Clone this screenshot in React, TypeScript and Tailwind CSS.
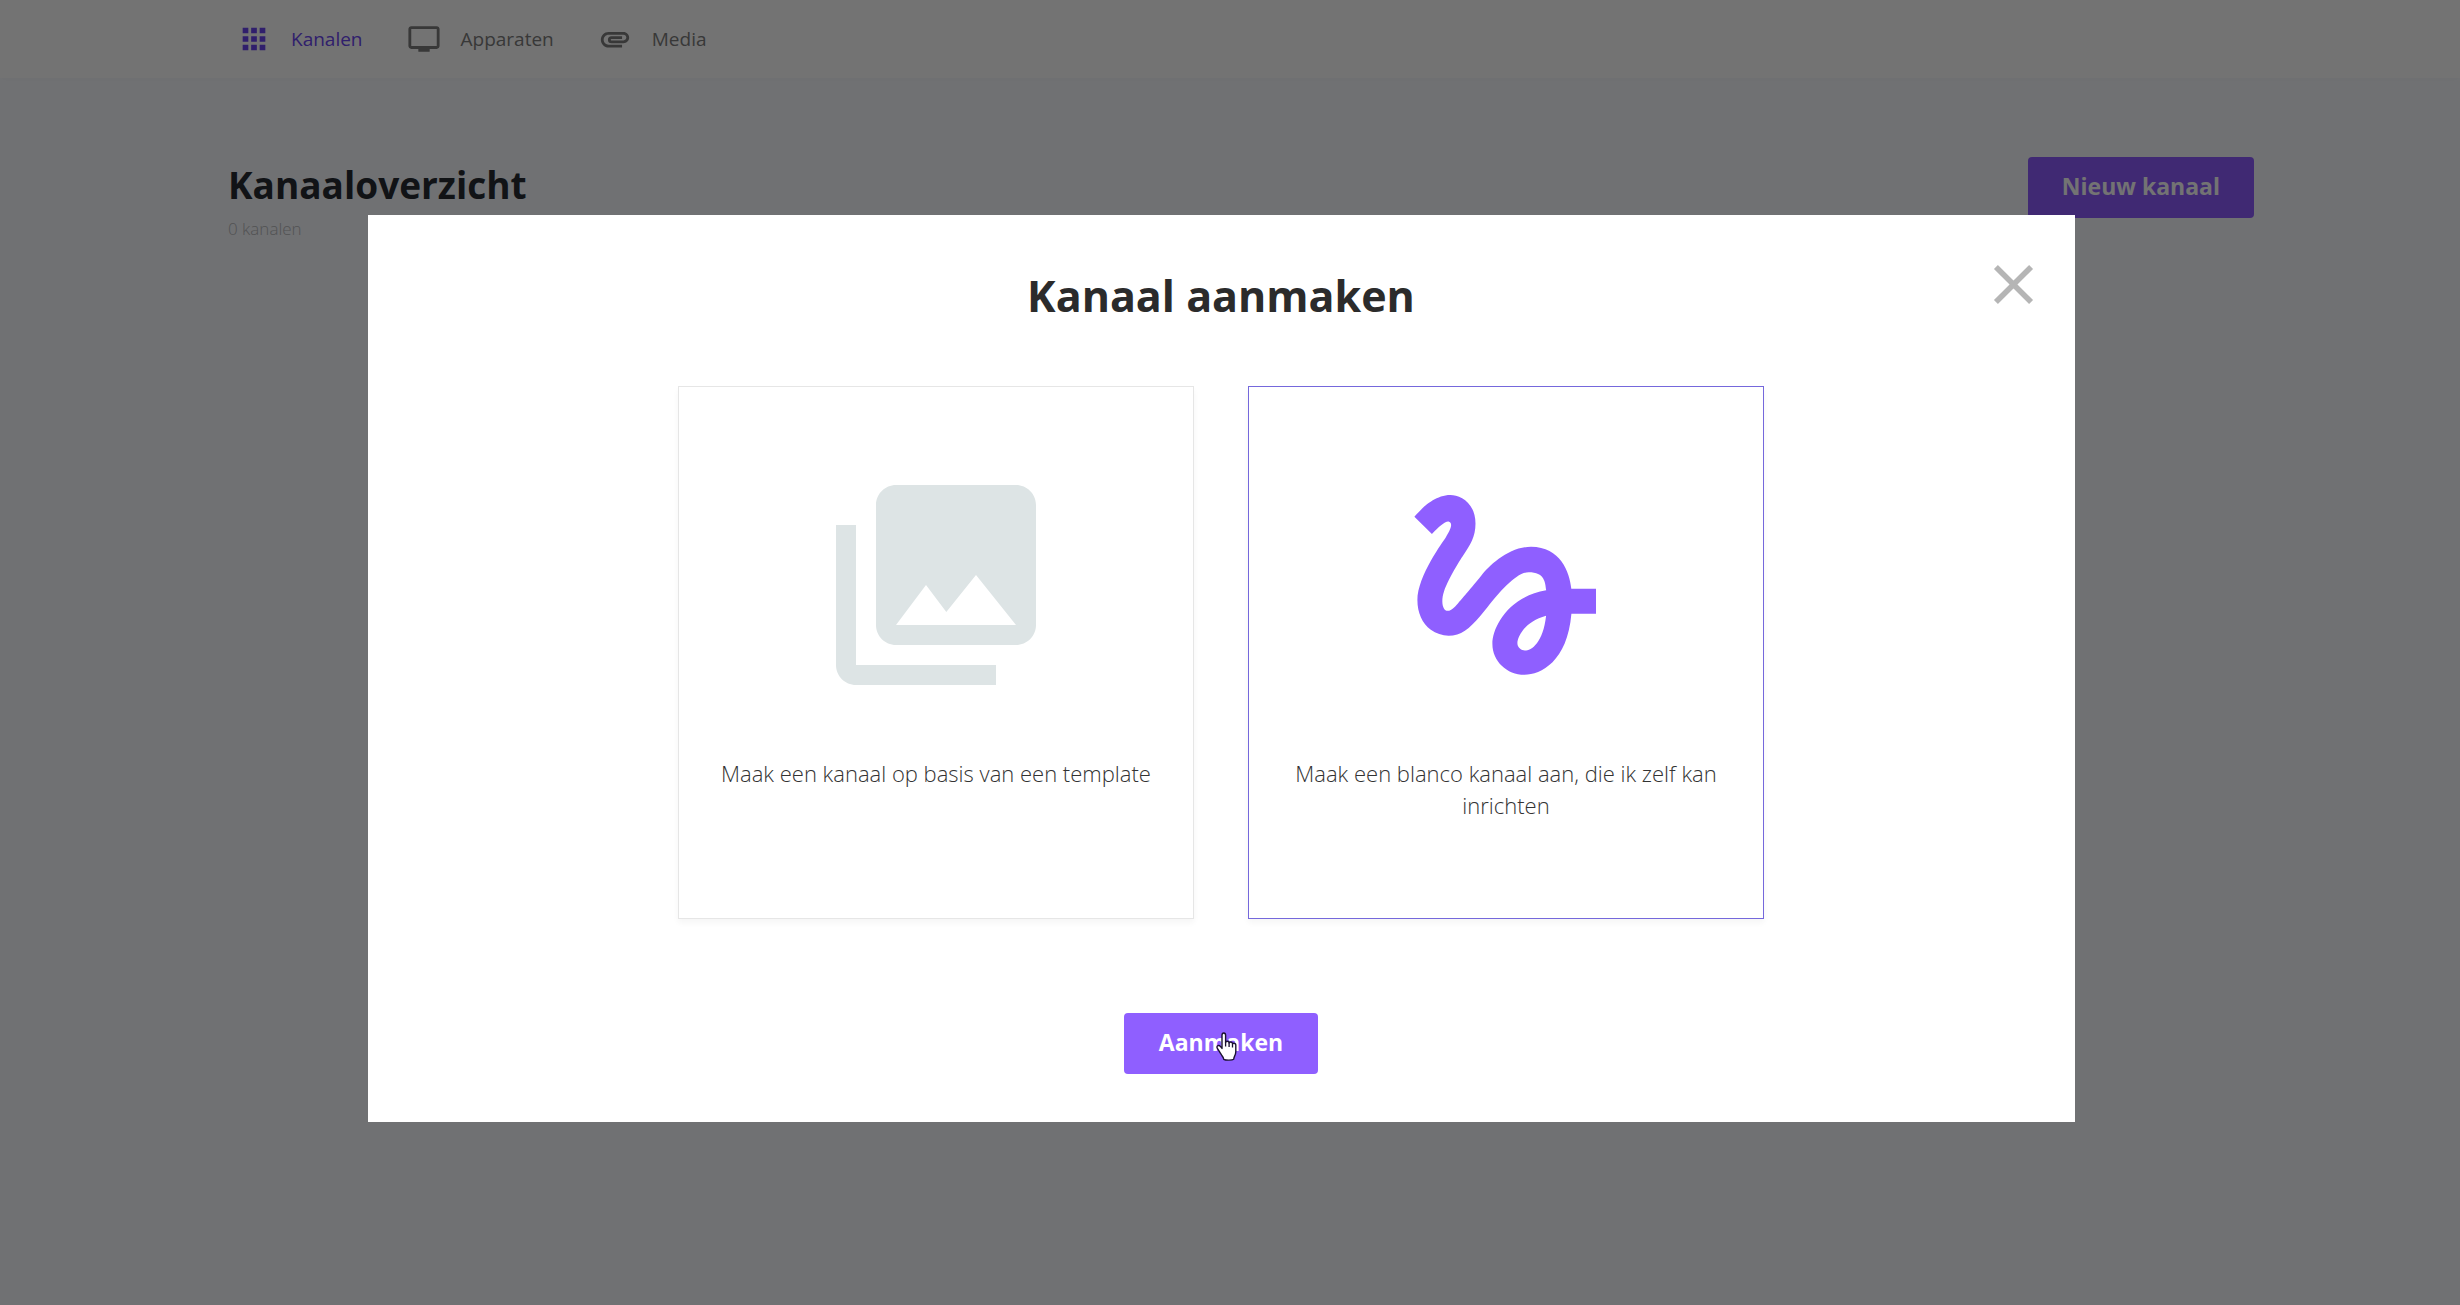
import { useState } from "react";
import type { ReactNode } from "react";
import { MdApps, MdAttachment, MdClose, MdCollections, MdGesture, MdTv } from "react-icons/md";

type NavItemProps = { icon: ReactNode; label: string; active?: boolean };

function NavItem({ icon, label, active }: NavItemProps) {
  return (
    <a
      href="#"
      aria-current={active ? "page" : undefined}
      className={
        active
          ? "flex items-center gap-5 text-[#6a45f0]"
          : "flex items-center gap-5 text-[#7c7c7c]"
      }
    >
      {icon}
      <span className="text-[19px] leading-7">{label}</span>
    </a>
  );
}

type OptionCardProps = {
  value: string;
  icon: ReactNode;
  label: string;
  selected: boolean;
  onSelect: (value: string) => void;
};

function OptionCard({ value, icon, label, selected, onSelect }: OptionCardProps) {
  return (
    <label
      className={
        selected
          ? "flex min-h-[533px] flex-1 cursor-pointer flex-col items-center gap-[52px] border border-[#7568dc] px-8 pt-[78px] text-[#8f5fff] shadow-[0_4px_6px_rgba(0,0,0,0.04)]"
          : "flex min-h-[533px] flex-1 cursor-pointer flex-col items-center gap-[52px] border border-[#e6e6e6] px-8 pt-[78px] text-[#dde4e5] shadow-[0_4px_6px_rgba(0,0,0,0.04)]"
      }
    >
      <input
        type="radio"
        name="channel-type"
        value={value}
        checked={selected}
        onChange={() => onSelect(value)}
        className="sr-only"
      />
      {icon}
      <span className="text-center text-[22px] leading-8 font-light text-[#333333]">{label}</span>
    </label>
  );
}

function HandCursor() {
  return (
    <svg
      viewBox="0 0 24 30"
      aria-hidden="true"
      className="pointer-events-none absolute top-[19px] left-[91px] h-[30px] w-6"
    >
      <path
        d="M7 3.2C7 1.9 7.8 1 8.8 1s1.8.9 1.8 2.2v7.2c.3-.9 1-1.2 1.7-1.2 1 0 1.7.7 1.8 1.7.3-.6.9-.9 1.6-.9 1 0 1.7.8 1.8 1.8.3-.4.8-.6 1.4-.6 1.1 0 1.9.9 1.9 2.1v6.2c0 2-.5 3.400-1.300 4.900-.5.900-.700 1.900-.8 2.900-1.500 1.100-8.300 1.100-9.900 0-.2-1.600-1-2.700-2.100-4.100-1.500-2-2.700-4.300-4.200-6.600-.9-1.400-.6-2.500.3-2.900 1-.5 2 0 2.800.9L7 16.400z"
        fill="#ffffff"
        stroke="#1b1230"
        strokeWidth="1.4"
        strokeLinejoin="round"
      />
      <path d="M10.600 10v4.500M14.100 11v4M17.500 12v3.500" stroke="#1b1230" strokeWidth="1.300" fill="none" />
    </svg>
  );
}

export default function App() {
  const [kind, setKind] = useState("blank");

  return (
    <div className="min-h-screen bg-[#f9fbff] font-['Open_Sans',sans-serif]">
      <header className="bg-white shadow-[0_2px_10px_rgba(0,0,0,0.02)]">
        <nav className="flex h-[78px] items-center gap-11 pl-[237px]">
          <NavItem active label="Kanalen" icon={<MdApps className="size-[34px]" />} />
          <NavItem label="Apparaten" icon={<MdTv className="size-[34px]" />} />
          <NavItem label="Media" icon={<MdAttachment className="size-[34px]" />} />
        </nav>
      </header>

      <main className="flex items-start justify-between pt-[79px] pr-[206px] pl-[228px]">
        <div>
          <h1 className="text-[37px] leading-[56px] font-bold text-[#272b32]">Kanaaloverzicht</h1>
          <p className="text-[17px] leading-8 font-light text-[#b4b6ba]">0 kanalen</p>
        </div>
        <button type="button" className="h-[61px] rounded bg-[#8e5cff] px-[34px] pb-0.5 text-[23px] font-bold text-white">
          Nieuw kanaal
        </button>
      </main>

      <div className="fixed inset-0 flex items-start justify-center bg-black/55 pt-[215px] pr-[18px]">
        <section
          role="dialog"
          aria-modal="true"
          aria-labelledby="dialog-title"
          className="relative flex w-[70%] max-w-[1707px] flex-col items-center bg-white pt-[51px] pb-12"
        >
          <button
            type="button"
            aria-label="Sluiten"
            className="absolute top-9 right-7 text-[#b5b5b5]"
          >
            <MdClose className="size-[67px]" />
          </button>
          <h2 id="dialog-title" className="text-[43px] leading-[60px] font-bold text-[#2b2b2b]">
            Kanaal aanmaken
          </h2>
          <div role="radiogroup" aria-labelledby="dialog-title" className="mt-[60px] flex w-[1086px] max-w-full gap-[54px]">
            <OptionCard
              value="template"
              label="Maak een kanaal op basis van een template"
              icon={<MdCollections className="size-60" />}
              selected={kind === "template"}
              onSelect={setKind}
            />
            <OptionCard
              value="blank"
              label="Maak een blanco kanaal aan, die ik zelf kan inrichten"
              icon={<MdGesture className="size-60" />}
              selected={kind === "blank"}
              onSelect={setKind}
            />
          </div>
          <button
            type="button"
            className="relative mt-[94px] h-[61px] rounded bg-[#8f5fff] px-[35px] pb-0.5 text-[23px] font-bold text-white"
          >
            Aanmaken
            <HandCursor />
          </button>
        </section>
      </div>
    </div>
  );
}
